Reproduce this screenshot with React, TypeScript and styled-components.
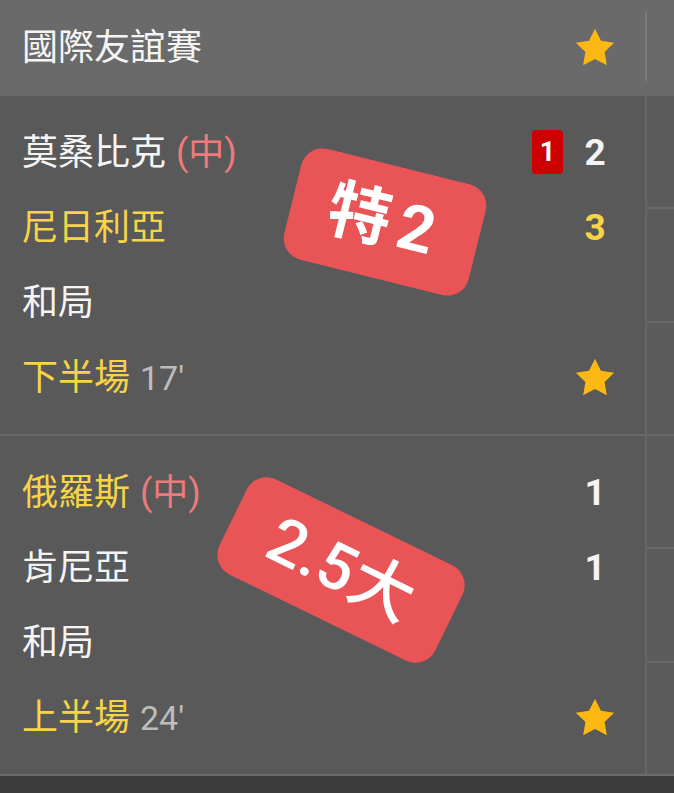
import React from 'react';
import styled, { createGlobalStyle } from 'styled-components';

const GlobalStyle = createGlobalStyle`
  html, body {
    margin: 0;
    padding: 0;
    background: #3b3b3b;
  }
  body {
    font-family: "Roboto", "Noto Sans CJK TC", sans-serif;
  }
`;

const WHITE = '#f4f4f4';
const YELLOW = '#f5d547';

const Page = styled.div`
  width: 674px;
  display: flex;
  flex-direction: column;
  background: #595959;
`;

const HeaderRow = styled.div`
  display: flex;
  height: 96px;
  background: #6a6a6a;
`;

const HeaderMain = styled.div`
  width: 645px;
  display: flex;
  align-items: center;
  padding: 0 25px 0 22px;
  box-sizing: border-box;
`;

const Title = styled.div`
  flex: 1;
  color: ${WHITE};
  font-size: 36px;
  line-height: 1;
`;

const HeaderSide = styled.div`
  flex: 1;
  display: flex;
  align-items: center;
`;

const HeaderDivider = styled.div`
  width: 2px;
  height: 69px;
  margin-top: -3px;
  background: #7a7a7a;
`;

const Group = styled.div<{ $last?: boolean }>`
  position: relative;
  display: flex;
  border-bottom: 2px solid ${p => (p.$last ? '#6c6c6c' : '#676767')};
`;

const GroupMain = styled.div`
  width: 645px;
  padding: 19px 25px 19px 22px;
  box-sizing: border-box;
  display: flex;
  flex-direction: column;
`;

const Line = styled.div`
  height: 75px;
  display: flex;
  align-items: center;
`;

const Label = styled.div<{ $color: string }>`
  flex: 1;
  color: ${p => p.$color};
  font-size: 36px;
  line-height: 1;
  white-space: nowrap;
`;

const Tag = styled.span`
  color: #ee7b7b;
  margin-left: 10px;
`;

const Minute = styled.span`
  color: #bdbdbd;
  margin-left: 10px;
  font-size: 34px;
`;

const ScoreWrap = styled.div`
  display: flex;
  align-items: center;
  gap: 7px;
`;

const RedCard = styled.div`
  width: 31px;
  height: 44px;
  margin-top: -2px;
  border-radius: 4px;
  background: #cc0000;
  color: #fff;
  font: bold 27px "Roboto", sans-serif;
  display: flex;
  align-items: center;
  justify-content: center;
`;

const Score = styled.div<{ $color: string }>`
  width: 50px;
  text-align: center;
  color: ${p => p.$color};
  font: bold 37px "Roboto", sans-serif;
  line-height: 1;
`;

const StarCell = styled.div`
  width: 50px;
  display: flex;
  justify-content: center;
`;

const Side = styled.div`
  flex: 1;
  display: flex;
  flex-direction: column;
  border-left: 2px solid #676767;
  background: #5b5b5b;
`;

const OddsCell = styled.div<{ $first?: boolean }>`
  flex: 1;
  border-top: ${p => (p.$first ? 'none' : '2px solid #676767')};
`;

const Sticker = styled.div<{ $x: number; $y: number; $w: number; $h: number; $rot: number; $weight: number; $spacing: number }>`
  position: absolute;
  left: ${p => p.$x - p.$w / 2}px;
  top: ${p => p.$y - p.$h / 2}px;
  width: ${p => p.$w}px;
  height: ${p => p.$h}px;
  border-radius: 22px;
  background: #e95457;
  color: #fff;
  transform: rotate(${p => p.$rot}deg);
  display: flex;
  align-items: center;
  justify-content: center;
  font-family: "Roboto", "Noto Sans CJK TC", sans-serif;
  font-size: 64px;
  font-weight: ${p => p.$weight};
  letter-spacing: ${p => p.$spacing}px;
  line-height: 1;
  pointer-events: none;
`;

const Footer = styled.div`
  height: 17px;
  background: #3b3b3b;
`;

function Star() {
  return (
    <svg width="46" height="46" viewBox="0 0 24 24">
      <polygon
        points="12,2 15.09,8.26 22,9.27 17,14.14 18.18,21.02 12,17.77 5.82,21.02 7,14.14 2,9.27 8.91,8.26"
        fill="#fdb813"
      />
    </svg>
  );
}

type TeamLine = {
  name: string;
  color: string;
  neutral?: boolean;
  score?: number;
  scoreColor?: string;
  redCards?: number;
};

type Match = {
  lines: TeamLine[];
  period: string;
  minute: string;
  sticker: { text: string; x: number; y: number; w: number; h: number; rot: number; weight: number; spacing: number };
};

const matches: Match[] = [
  {
    lines: [
      { name: '莫桑比克', color: WHITE, neutral: true, score: 2, scoreColor: WHITE, redCards: 1 },
      { name: '尼日利亞', color: YELLOW, score: 3, scoreColor: YELLOW },
      { name: '和局', color: WHITE },
    ],
    period: '下半場',
    minute: "17'",
    sticker: { text: '特2', x: 385, y: 126, w: 190, h: 114, rot: 14, weight: 700, spacing: 8 },
  },
  {
    lines: [
      { name: '俄羅斯', color: YELLOW, neutral: true, score: 1, scoreColor: WHITE },
      { name: '肯尼亞', color: WHITE, score: 1, scoreColor: WHITE },
      { name: '和局', color: WHITE },
    ],
    period: '上半場',
    minute: "24'",
    sticker: { text: '2.5大', x: 341, y: 134, w: 240, h: 106, rot: 26, weight: 500, spacing: 0 },
  },
];

export default function App() {
  return (
    <Page>
      <GlobalStyle />
      <HeaderRow>
        <HeaderMain>
          <Title>國際友誼賽</Title>
          <StarCell><Star /></StarCell>
        </HeaderMain>
        <HeaderSide><HeaderDivider /></HeaderSide>
      </HeaderRow>

      {matches.map((m, i) => (
        <Group key={i} $last={i === matches.length - 1}>
          <GroupMain>
            {m.lines.map((l, j) => (
              <Line key={j}>
                <Label $color={l.color}>
                  {l.name}
                  {l.neutral && <Tag>(中)</Tag>}
                </Label>
                {l.score !== undefined && (
                  <ScoreWrap>
                    {l.redCards ? <RedCard>{l.redCards}</RedCard> : null}
                    <Score $color={l.scoreColor || WHITE}>{l.score}</Score>
                  </ScoreWrap>
                )}
              </Line>
            ))}
            <Line>
              <Label $color={YELLOW}>
                {m.period}
                <Minute>{m.minute}</Minute>
              </Label>
              <StarCell><Star /></StarCell>
            </Line>
          </GroupMain>
          <Side>
            <OddsCell $first />
            <OddsCell />
            <OddsCell />
          </Side>
          <Sticker
            $x={m.sticker.x}
            $y={m.sticker.y}
            $w={m.sticker.w}
            $h={m.sticker.h}
            $rot={m.sticker.rot}
            $weight={m.sticker.weight}
            $spacing={m.sticker.spacing}
          >
            {m.sticker.text}
          </Sticker>
        </Group>
      ))}
      <Footer />
    </Page>
  );
}
